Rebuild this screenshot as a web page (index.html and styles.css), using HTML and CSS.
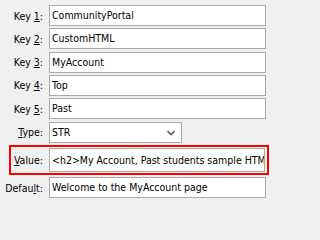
FILE: index.html
```html
<!DOCTYPE html>
<html>
<head>
<meta charset="utf-8">
<link rel="stylesheet" href="styles.css">
</head>
<body>
<div class="form">
  <div class="row"><span class="label">Key <u>1</u>:</span><div class="field">CommunityPortal</div></div>
  <div class="row"><span class="label">Key <u>2</u>:</span><div class="field">CustomHTML</div></div>
  <div class="row"><span class="label">Key <u>3</u>:</span><div class="field">MyAccount</div></div>
  <div class="row"><span class="label">Key <u>4</u>:</span><div class="field">Top</div></div>
  <div class="row"><span class="label">Key <u>5</u>:</span><div class="field">Past</div></div>
  <div class="row"><span class="label"><u>T</u>ype:</span>
    <div class="select">STR
      <svg class="chev" width="8" height="6" viewBox="0 0 8 6"><path d="M0.5 1 L4 4.5 L7.5 1" fill="none" stroke="#606060" stroke-width="1.6"/></svg>
    </div>
  </div>
  <div class="row highlight"><span class="label"><u>V</u>alue:</span><div class="field tall">&lt;h2&gt;My Account, Past students sample HTML&lt;/h2&gt;</div></div>
  <div class="row"><span class="label">Defau<u>l</u>t:</span><div class="field">Welcome to the MyAccount page</div></div>
</div>
</body>
</html>
```
FILE: styles.css
```css
html, body {
  margin: 0;
  padding: 0;
  background: #f0f0f0;
}
body {
  width: 271px;
  height: 202px;
  overflow: hidden;
  font-family: "DejaVu Sans Condensed", "DejaVu Sans", sans-serif;
  font-stretch: condensed;
  font-size: 10.5px;
  color: #000;
}
.form {
  display: flex;
  flex-direction: column;
  gap: 2.33px;
  padding: 5px 5px 0 0;
}
.row {
  display: grid;
  grid-template-columns: 43px 1fr;
  column-gap: 6px;
  align-items: center;
  height: 21px;
}
.label {
  text-align: right;
  white-space: nowrap;
}
.field {
  height: 21px;
  box-sizing: border-box;
  border: 1px solid #ababab;
  background: #fff;
  padding: 0 2px;
  line-height: 19px;
  white-space: nowrap;
  overflow: hidden;
}
.select {
  width: 133px;
  height: 21px;
  box-sizing: border-box;
  border: 1px solid #ababab;
  background: #fff;
  padding: 0 2px;
  line-height: 19px;
  position: relative;
}
.chev {
  position: absolute;
  right: 6px;
  top: 7px;
}
.highlight {
  height: 30px;
  box-sizing: border-box;
  margin-left: 9px;
  width: 260px;
  border: 2px solid #ff0000;
  padding: 1px 2px 1px 0;
  grid-template-columns: 32px 1fr;
}
.field.tall {
  height: 24px;
  line-height: 22px;
}
```
